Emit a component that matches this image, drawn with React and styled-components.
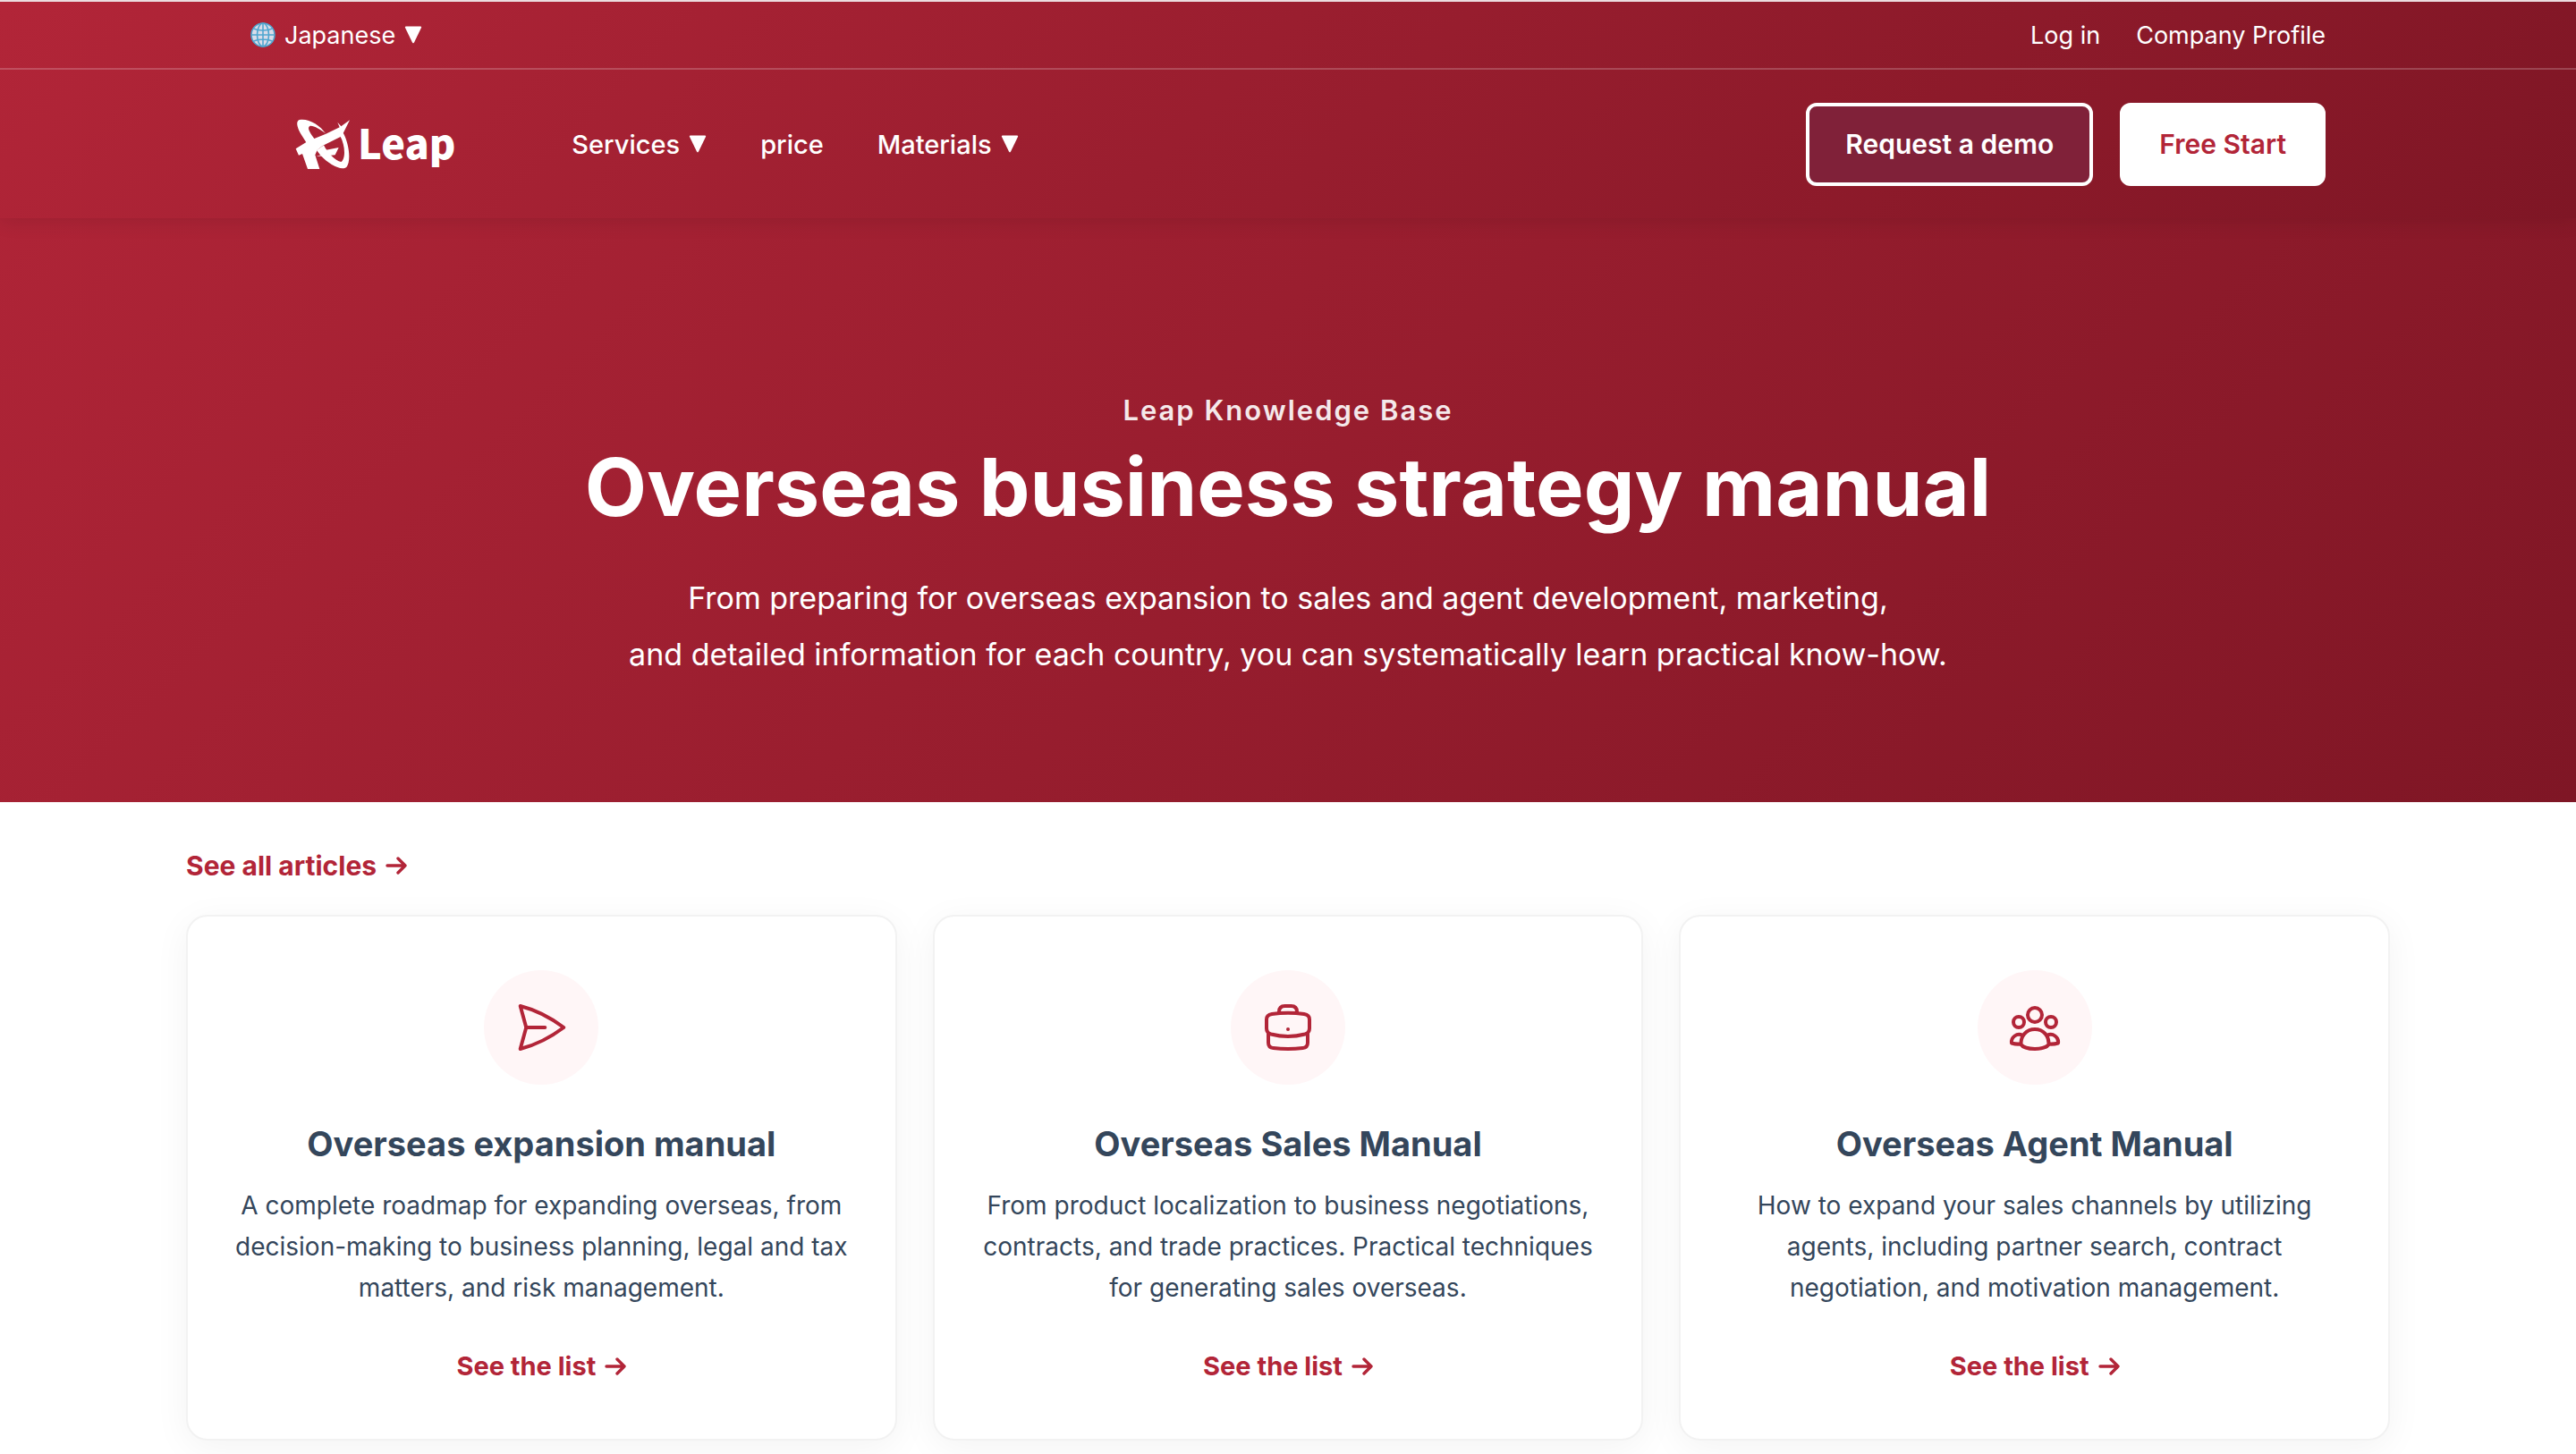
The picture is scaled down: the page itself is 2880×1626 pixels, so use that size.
import styled, { createGlobalStyle } from "styled-components";

const GlobalStyle = createGlobalStyle`
    * {
        box-sizing: border-box;
    }

    body {
        margin: 0;
        background-color: #fff;
        color: #34465b;
        font-family: Inter, "Liberation Sans", sans-serif;
        overflow-x: hidden;
    }
`;

const Header = styled.header`
    position: sticky;
    top: 0;
    z-index: 1;
    color: white;
    background: linear-gradient(135deg, #b22538 0%, #7f1625 100%);
    border-top: 2px solid #ecdcdf;
    box-shadow: 0 4px 20px rgba(0, 0, 0, 0.1);
`;

const Container = styled.div`
    max-width: 2400px;
    margin: 0 auto;
    padding: 0 40px;
    display: flex;
    align-items: center;
    justify-content: space-between;
`;

const TopBar = styled.div`
    border-bottom: 2px solid rgba(255, 255, 255, 0.2);
`;

const TopBarInner = styled(Container)`
    height: 74px;
`;

const LanguageButton = styled.button`
    display: flex;
    align-items: center;
    gap: 10px;
    padding: 0;
    border: none;
    background: none;
    color: white;
    font-family: inherit;
    font-size: 27px;
    cursor: pointer;
`;

const TopLinks = styled.div`
    display: flex;
    gap: 40px;
`;

const TopLink = styled.a`
    color: white;
    font-size: 27px;
    text-decoration: none;
`;

const NavBarInner = styled(Container)`
    height: 166px;
`;

const NavLeft = styled.div`
    display: flex;
    align-items: center;
    gap: 130px;
    padding-left: 50px;
`;

const Logo = styled.a`
    display: flex;
    align-items: flex-start;
    gap: 8px;
    color: white;
    font-family: "Noto Sans CJK JP", sans-serif;
    font-size: 45px;
    font-weight: 900;
    line-height: 54px;
    text-decoration: none;
`;

const Nav = styled.nav`
    display: flex;
    align-items: center;
    gap: 60px;
`;

const NavItem = styled.button`
    display: flex;
    align-items: center;
    gap: 10px;
    padding: 0;
    border: none;
    background: none;
    color: white;
    font-family: inherit;
    font-size: 29px;
    font-weight: 500;
    cursor: pointer;
`;

const Actions = styled.div`
    display: flex;
    gap: 30px;
`;

const ActionButton = styled.button`
    height: 93px;
    padding: 0 40px;
    border: 4px solid white;
    border-radius: 12px;
    background-color: ${(props) => (props.$primary ? "white" : "#802139")};
    color: ${(props) => (props.$primary ? "#b22538" : "white")};
    font-family: inherit;
    font-size: 30px;
    font-weight: 600;
    cursor: pointer;
`;

/* runs up underneath the sticky header */
const Hero = styled.section`
    margin-top: -244px;
    padding: 437px 40px 134px;
    background: linear-gradient(135deg, #b22538 0%, #7f1625 100%);
    color: white;
    text-align: center;
`;

const Eyebrow = styled.p`
    margin: 0;
    font-size: 31px;
    font-weight: 600;
    line-height: 44px;
    letter-spacing: 2px;
    opacity: 0.9;
`;

const HeroTitle = styled.h1`
    margin: 8px 0 36px;
    font-size: 90px;
    font-weight: 700;
    line-height: 112px;
`;

const HeroText = styled.p`
    margin: 0;
    font-size: 34px;
    line-height: 63px;
`;

const Main = styled.main`
    max-width: 2544px;
    margin: 0 auto;
    padding: 48px 40px;
`;

const ArrowLink = styled.a`
    display: inline-flex;
    align-items: center;
    gap: 10px;
    color: #b22538;
    font-size: ${(props) => (props.$large ? "30px" : "29px")};
    font-weight: 700;
    line-height: 46px;
    text-decoration: none;
`;

const CardGrid = styled.div`
    display: grid;
    grid-template-columns: repeat(3, 1fr);
    gap: 40px;
    margin-top: 32px;
`;

const Card = styled.article`
    display: flex;
    flex-direction: column;
    align-items: center;
    padding: 60px 48px 58px;
    border: 2px solid #f2f2f2;
    border-radius: 24px;
    background-color: white;
    box-shadow: 0 8px 40px rgba(0, 0, 0, 0.05);
    text-align: center;
`;

const IconCircle = styled.div`
    display: flex;
    align-items: center;
    justify-content: center;
    width: 128px;
    height: 128px;
    border-radius: 50%;
    background-color: #fff6f7;
`;

const CardTitle = styled.h2`
    margin: 40px 0 20px;
    font-size: 38px;
    font-weight: 700;
    line-height: 52px;
`;

const CardText = styled.p`
    margin: 0 0 42px;
    font-size: 28px;
    line-height: 46px;
`;

const LogoMark = () => (
    <svg width="62" height="58" viewBox="60 60 186 174" fill="white" aria-hidden="true">
        <path d="M163 113C142 82 104 60 74 66C62 70 66 90 78 112L98 143L126 131C112 114 98 92 109 87C120 84 144 98 163 113Z" />
        <path d="M62 163L102 138L163 113L200 95L209 91L202 74L214 88L243 67L221 111L212 123L152 153L134 167L127 184L142 231L102 231L84 180L72 185Z" />
        <path d="M220 108C242 146 248 206 232 225C214 238 172 214 146 186L132 168L156 151C168 176 194 204 214 207C230 196 228 152 211 121Z" />
        <path d="M130 188L165 179L160 168L206 159L194 184L166 187Z" />
    </svg>
);

const GlobeIcon = () => (
    <svg width="28" height="28" viewBox="0 0 28 28" fill="none" stroke="#4fa6d0" strokeWidth="1.6" aria-hidden="true">
        <circle cx="14" cy="14" r="13" fill="#d9dce9" />
        <ellipse cx="14" cy="14" rx="6.5" ry="13" />
        <path d="M14 1v26M1 14h26M3.5 7c6 2.6 15 2.6 21 0M3.5 21c6-2.6 15-2.6 21 0" />
    </svg>
);

const CaretIcon = () => (
    <svg width="20" height="20" viewBox="0 0 20 20" fill="white" aria-hidden="true">
        <path d="M2 0.5h16q1.6 0 1 1.6L11 18.6q-1 1.6-2 0L1 2.1Q.4.5 2 .5Z" />
    </svg>
);

const ArrowIcon = () => (
    <svg width="24" height="20" viewBox="0 0 24 20" fill="none" stroke="currentColor" strokeWidth="3.4" strokeLinecap="round" strokeLinejoin="round" aria-hidden="true">
        <path d="M2 10h20M14 2l8 8-8 8" />
    </svg>
);

const LineIcon = ({ children }) => (
    <svg width="64" height="64" viewBox="0 0 64 64" fill="none" stroke="#b22538" strokeWidth="4" strokeLinecap="round" strokeLinejoin="round" aria-hidden="true">
        {children}
    </svg>
);

const cards = [
    {
        title: "Overseas expansion manual",
        lines: [
            "A complete roadmap for expanding overseas, from",
            "decision-making to business planning, legal and tax",
            "matters, and risk management."
        ],
        icon: (
            <LineIcon>
                <path d="M8.7 8Q34 14.5 57.3 32Q34 49.5 8.7 56L15.3 32Z" />
                <path d="M15.3 32H36.3" />
            </LineIcon>
        )
    },
    {
        title: "Overseas Sales Manual",
        lines: [
            "From product localization to business negotiations,",
            "contracts, and trade practices. Practical techniques",
            "for generating sales overseas."
        ],
        icon: (
            <LineIcon>
                <path d="M22 16V14.5Q22 8 28.5 8H35.5Q42 8 42 14.5V16" />
                <path d="M14 17Q32 14.6 50 17Q56 18 56 23V33Q56 38 51 39.5Q32 44.5 13 39.5Q8 38 8 33V23Q8 18 14 17Z" />
                <path d="M10 39V49Q10 54.5 15.5 55Q32 57 48.5 55Q54 54.5 54 49V39" />
                <circle cx="32" cy="34" r="2" fill="#b22538" stroke="none" />
            </LineIcon>
        )
    },
    {
        title: "Overseas Agent Manual",
        lines: [
            "How to expand your sales channels by utilizing",
            "agents, including partner search, contract",
            "negotiation, and motivation management."
        ],
        icon: (
            <LineIcon>
                <circle cx="32" cy="18" r="8" />
                <circle cx="14" cy="26" r="6" />
                <circle cx="50" cy="26" r="6" />
                <path d="M16.5 51C16 42 22 34 32 34S48 42 47.5 51C43 57.6 21 57.6 16.5 51Z" />
                <path d="M18.5 41C12 37.5 5 43 6 49.5Q11 51 16 50.5" />
                <path d="M45.5 41C52 37.5 59 43 58 49.5Q53 51 48 50.5" />
            </LineIcon>
        )
    }
];

const App = () => {
    return (
        <>
            <GlobalStyle />
            <Header>
                <TopBar>
                    <TopBarInner>
                        <LanguageButton>
                            <GlobeIcon />
                            Japanese
                            <CaretIcon />
                        </LanguageButton>
                        <TopLinks>
                            <TopLink href="#login">Log in</TopLink>
                            <TopLink href="#company">Company Profile</TopLink>
                        </TopLinks>
                    </TopBarInner>
                </TopBar>
                <NavBarInner>
                    <NavLeft>
                        <Logo href="#top">
                            <LogoMark />
                            Leap
                        </Logo>
                        <Nav>
                            <NavItem>
                                Services
                                <CaretIcon />
                            </NavItem>
                            <NavItem>price</NavItem>
                            <NavItem>
                                Materials
                                <CaretIcon />
                            </NavItem>
                        </Nav>
                    </NavLeft>
                    <Actions>
                        <ActionButton>Request a demo</ActionButton>
                        <ActionButton $primary>Free Start</ActionButton>
                    </Actions>
                </NavBarInner>
            </Header>
            <Hero>
                <Eyebrow>Leap Knowledge Base</Eyebrow>
                <HeroTitle>Overseas business strategy manual</HeroTitle>
                <HeroText>
                    From preparing for overseas expansion to sales and agent development, marketing,
                    <br />
                    and detailed information for each country, you can systematically learn practical know-how.
                </HeroText>
            </Hero>
            <Main>
                <ArrowLink href="#articles" $large>
                    See all articles
                    <ArrowIcon />
                </ArrowLink>
                <CardGrid>
                    {cards.map((card) => (
                        <Card key={card.title}>
                            <IconCircle>{card.icon}</IconCircle>
                            <CardTitle>{card.title}</CardTitle>
                            <CardText>
                                {card.lines[0]}
                                <br />
                                {card.lines[1]}
                                <br />
                                {card.lines[2]}
                            </CardText>
                            <ArrowLink href="#list">
                                See the list
                                <ArrowIcon />
                            </ArrowLink>
                        </Card>
                    ))}
                </CardGrid>
            </Main>
        </>
    );
};

export default App;
